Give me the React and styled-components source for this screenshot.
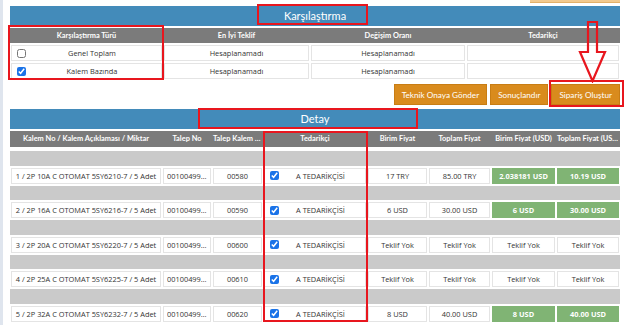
import styled, { createGlobalStyle } from 'styled-components';

const GlobalStyle = createGlobalStyle`
  body {
    margin: 0;
    background: #ffffff;
    font-family: "Open Sans", "Liberation Sans", sans-serif;
  }
`;

const BLUE = '#438bba';
const HEAD = '#7b7b7b';
const SEP = '#cacaca';
const GREEN = '#80b474';
const ORANGE = '#d98b1d';
const RED = '#e8161e';

const compareRows = [
  { label: 'Genel Toplam', checked: false, best: 'Hesaplanamadı', rate: 'Hesaplanamadı' },
  { label: 'Kalem Bazında', checked: true, best: 'Hesaplanamadı', rate: 'Hesaplanamadı' },
];

const detailRows = [
  { item: '1 / 2P 10A C OTOMAT 5SY6210-7 / 5 Adet', line: '00580', unit: '17 TRY', total: '85.00 TRY', unitUsd: '2.038181 USD', totalUsd: '10.19 USD', green: true },
  { item: '2 / 2P 16A C OTOMAT 5SY6216-7 / 5 Adet', line: '00590', unit: '6 USD', total: '30.00 USD', unitUsd: '6 USD', totalUsd: '30.00 USD', green: true },
  { item: '3 / 2P 20A C OTOMAT 5SY6220-7 / 5 Adet', line: '00600', unit: 'Teklif Yok', total: 'Teklif Yok', unitUsd: 'Teklif Yok', totalUsd: 'Teklif Yok', green: false },
  { item: '4 / 2P 25A C OTOMAT 5SY6225-7 / 5 Adet', line: '00610', unit: 'Teklif Yok', total: 'Teklif Yok', unitUsd: 'Teklif Yok', totalUsd: 'Teklif Yok', green: false },
  { item: '5 / 2P 32A C OTOMAT 5SY6232-7 / 5 Adet', line: '00620', unit: '8 USD', total: '40.00 USD', unitUsd: '8 USD', totalUsd: '40.00 USD', green: true },
];

const COMPARE_COLS = '153px 147px 156px 154px';
const DETAIL_COLS = '152px 50px 51px 104px 61px 63px 65px 64px';

function App() {
  return (
    <Page>
      <GlobalStyle />

      <TopStub />

      <TitleBar>Karşılaştırma</TitleBar>

      <HeadRow $cols={COMPARE_COLS}>
        <HeadCell>Karşılaştırma Türü</HeadCell>
        <HeadCell>En İyi Teklif</HeadCell>
        <HeadCell>Değişim Oranı</HeadCell>
        <HeadCell>Tedarikçi</HeadCell>
      </HeadRow>

      {compareRows.map((r) => (
        <CompareRow key={r.label} $cols={COMPARE_COLS}>
          <Cell $left>
            <Check type="checkbox" defaultChecked={r.checked} />
            <CellText>{r.label}</CellText>
          </Cell>
          <Cell><CellText>{r.best}</CellText></Cell>
          <Cell><CellText>{r.rate}</CellText></Cell>
          <Cell />
        </CompareRow>
      ))}

      <Actions>
        <ActionButton type="button">Teknik Onaya Gönder</ActionButton>
        <ActionButton type="button">Sonuçlandır</ActionButton>
        <ActionButton type="button">Sipariş Oluştur</ActionButton>
      </Actions>

      <TitleBar $detail>Detay</TitleBar>

      <HeadRow $cols={DETAIL_COLS} $tall>
        <HeadCell>Kalem No / Kalem Açıklaması / Miktar</HeadCell>
        <HeadCell>Talep No</HeadCell>
        <HeadCell>Talep Kalem No</HeadCell>
        <HeadCell>Tedarikçi</HeadCell>
        <HeadCell>Birim Fiyat</HeadCell>
        <HeadCell>Toplam Fiyat</HeadCell>
        <HeadCell>Birim Fiyat (USD)</HeadCell>
        <HeadCell>Toplam Fiyat (USD)</HeadCell>
      </HeadRow>

      <Rows>
        {detailRows.map((r) => (
          <Group key={r.item}>
            <SepRow />
            <DetailRow $cols={DETAIL_COLS}>
              <Cell><CellText>{r.item}</CellText></Cell>
              <Cell><CellText>00100499123</CellText></Cell>
              <Cell><CellText>{r.line}</CellText></Cell>
              <Cell $left>
                <Check type="checkbox" defaultChecked />
                <CellText>A TEDARİKÇİSİ</CellText>
              </Cell>
              <Cell><CellText>{r.unit}</CellText></Cell>
              <Cell><CellText>{r.total}</CellText></Cell>
              <Cell $green={r.green}><CellText>{r.unitUsd}</CellText></Cell>
              <Cell $green={r.green}><CellText>{r.totalUsd}</CellText></Cell>
            </DetailRow>
          </Group>
        ))}
      </Rows>

      <Mark $x={257} $y={4} $w={111} $h={21} />
      <Mark $x={8} $y={25} $w={156} $h={55} />
      <Mark $x={549} $y={80} $w={75} $h={27} />
      <Mark $x={198} $y={108} $w={220} $h={21} />
      <Mark $x={263} $y={131} $w={105} $h={191} />

      <Arrow width="30" height="62" viewBox="0 0 30 62">
        <path d="M10 1 H19 V31 H27 L14.5 60 L2 31 H10 Z" fill="none" stroke={RED} strokeWidth="2.2" strokeLinejoin="miter" />
      </Arrow>
    </Page>
  );
}

export default App;

const Page = styled.div`
  position: relative;
  width: 627px;
  height: 325px;
  box-sizing: border-box;
  overflow: hidden;
  border-left: 3px solid #dfe5ee;
  padding: 0 7px;
  background: #ffffff;
`;

const TopStub = styled.div`
  margin-left: auto;
  width: 90px;
  height: 2px;
  margin-bottom: 3px;
  background: #f1c98f;
  border-bottom: 1px solid #e2b06a;
`;

const TitleBar = styled.div`
  height: 20px;
  margin-top: ${(p) => (p.$detail ? '4px' : '0')};
  background: ${BLUE};
  color: #ffffff;
  font-family: Lato, "Liberation Sans", sans-serif;
  font-size: 11px;
  line-height: 20px;
  text-align: center;
`;

const HeadRow = styled.div`
  display: grid;
  grid-template-columns: ${(p) => p.$cols};
  height: ${(p) => (p.$tall ? '16px' : '15px')};
  margin-top: 2px;
  background: ${HEAD};
`;

const HeadCell = styled.div`
  padding: 0 1px;
  overflow: hidden;
  white-space: nowrap;
  text-overflow: ellipsis;
  color: #ffffff;
  font-family: Lato, "Liberation Sans", sans-serif;
  font-weight: 700;
  font-size: 7.4px;
  line-height: 16px;
  text-align: center;
`;

const CompareRow = styled.div`
  display: grid;
  grid-template-columns: ${(p) => p.$cols};
  height: 16px;
  margin-top: 2px;
`;

const Rows = styled.div`
  padding-top: 2px;
`;

const Group = styled.div`
  display: flex;
  flex-direction: column;
`;

const SepRow = styled.div`
  height: 14.5px;
  margin-top: 2px;
  background: ${SEP};
`;

const DetailRow = styled.div`
  display: grid;
  grid-template-columns: ${(p) => p.$cols};
  height: 16px;
  margin-top: 2px;
`;

const Cell = styled.div`
  display: flex;
  align-items: center;
  justify-content: center;
  min-width: 0;
  margin: 0 1px;
  padding: 0 3px;
  box-sizing: border-box;
  overflow: hidden;
  border: 1px solid ${(p) => (p.$green ? GREEN : '#e4e4e4')};
  background: ${(p) => (p.$green ? GREEN : '#ffffff')};
  color: ${(p) => (p.$green ? '#ffffff' : '#333333')};
  font-weight: ${(p) => (p.$green ? 700 : 400)};
  font-size: 7.4px;
  ${(p) => p.$left && 'justify-content: flex-start;'}
`;

const CellText = styled.span`
  flex: 1;
  min-width: 0;
  text-align: center;
  white-space: nowrap;
  overflow: hidden;
  text-overflow: ellipsis;
`;

const Check = styled.input`
  flex: none;
  width: 9px;
  height: 9px;
  margin: 0 0 0 2px;
  accent-color: #1a73e8;
`;

const Actions = styled.div`
  display: flex;
  justify-content: flex-end;
  gap: 3px;
  margin-top: 5px;
`;

const ActionButton = styled.button`
  height: 21px;
  padding: 0 7px;
  border: 1px solid #c87d14;
  background: ${ORANGE};
  color: #ffffff;
  font-family: Lato, "Liberation Sans", sans-serif;
  font-size: 8.2px;
  cursor: pointer;
`;

const Mark = styled.div`
  position: absolute;
  left: ${(p) => p.$x - 3}px;
  top: ${(p) => p.$y}px;
  width: ${(p) => p.$w}px;
  height: ${(p) => p.$h}px;
  box-sizing: border-box;
  border: 2px solid ${RED};
  pointer-events: none;
`;

const Arrow = styled.svg`
  position: absolute;
  left: ${578 - 3}px;
  top: 21px;
  pointer-events: none;
`;
